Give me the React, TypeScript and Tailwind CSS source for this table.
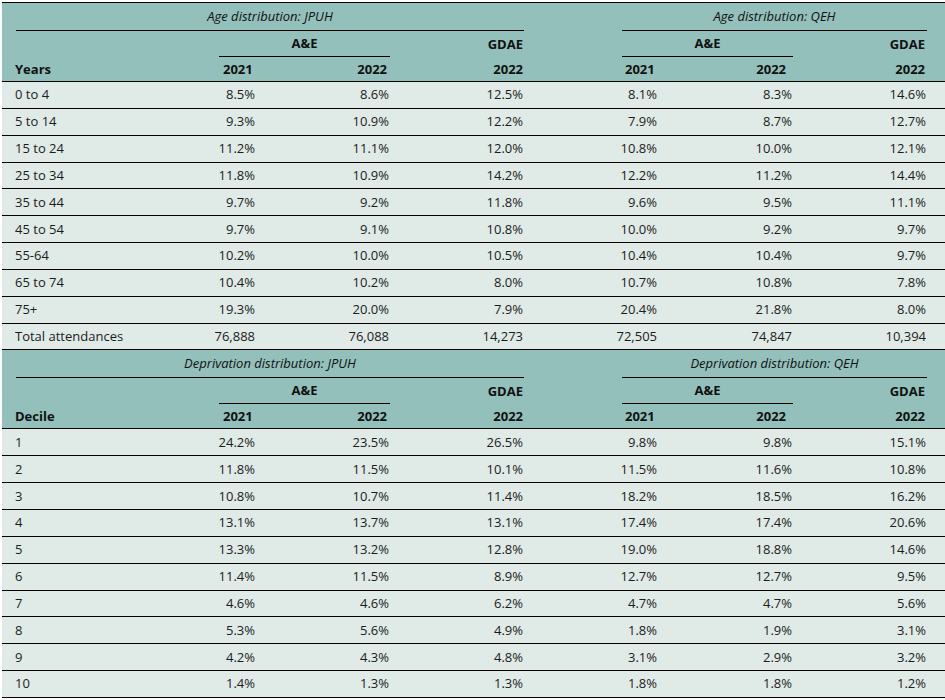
const ageRows: [string, string[]][] = [
  ["0 to 4", ["8.5%", "8.6%", "12.5%", "8.1%", "8.3%", "14.6%"]],
  ["5 to 14", ["9.3%", "10.9%", "12.2%", "7.9%", "8.7%", "12.7%"]],
  ["15 to 24", ["11.2%", "11.1%", "12.0%", "10.8%", "10.0%", "12.1%"]],
  ["25 to 34", ["11.8%", "10.9%", "14.2%", "12.2%", "11.2%", "14.4%"]],
  ["35 to 44", ["9.7%", "9.2%", "11.8%", "9.6%", "9.5%", "11.1%"]],
  ["45 to 54", ["9.7%", "9.1%", "10.8%", "10.0%", "9.2%", "9.7%"]],
  ["55-64", ["10.2%", "10.0%", "10.5%", "10.4%", "10.4%", "9.7%"]],
  ["65 to 74", ["10.4%", "10.2%", "8.0%", "10.7%", "10.8%", "7.8%"]],
  ["75+", ["19.3%", "20.0%", "7.9%", "20.4%", "21.8%", "8.0%"]],
  ["Total attendances", ["76,888", "76,088", "14,273", "72,505", "74,847", "10,394"]],
];

const decileRows: [string, string[]][] = [
  ["1", ["24.2%", "23.5%", "26.5%", "9.8%", "9.8%", "15.1%"]],
  ["2", ["11.8%", "11.5%", "10.1%", "11.5%", "11.6%", "10.8%"]],
  ["3", ["10.8%", "10.7%", "11.4%", "18.2%", "18.5%", "16.2%"]],
  ["4", ["13.1%", "13.7%", "13.1%", "17.4%", "17.4%", "20.6%"]],
  ["5", ["13.3%", "13.2%", "12.8%", "19.0%", "18.8%", "14.6%"]],
  ["6", ["11.4%", "11.5%", "8.9%", "12.7%", "12.7%", "9.5%"]],
  ["7", ["4.6%", "4.6%", "6.2%", "4.7%", "4.7%", "5.6%"]],
  ["8", ["5.3%", "5.6%", "4.9%", "1.8%", "1.9%", "3.1%"]],
  ["9", ["4.2%", "4.3%", "4.8%", "3.1%", "2.9%", "3.2%"]],
  ["10", ["1.4%", "1.3%", "1.3%", "1.8%", "1.8%", "1.2%"]],
];

const grid =
  "grid grid-cols-[198px_58px_132px_134px_76px_60px_133px_134px_18px]";

// right padding per value column, in table order
const valuePad = ["pr-[3px]", "pr-[1px]", "pr-[1px]", "pr-[3px]", "pr-[1px]", "pr-[1px]"];
const valueCol = [
  "col-start-2",
  "col-start-3",
  "col-start-4",
  "col-start-6",
  "col-start-7",
  "col-start-8",
];

function HeaderBlock({ title, label }: { title: string; label: string }) {
  return (
    <div className="bg-[#93c0ba] font-bold text-[#111]">
      <div className={`${grid} h-[28px]`}>
        <div className="col-span-4 ml-[14px] flex items-center justify-center border-b border-black font-normal italic">
          {title}: JPUH
        </div>
        <div className="col-start-6 col-span-3 ml-[22px] flex items-center justify-center border-b border-black font-normal italic">
          {title}: QEH
        </div>
      </div>
      <div className={`${grid} h-[26px]`}>
        <div className="col-start-2 col-span-2 ml-[19px] flex items-center justify-center border-b border-black">
          A&amp;E
        </div>
        <div className="col-start-4 flex items-center justify-end pr-[1px]">GDAE</div>
        <div className="col-start-6 col-span-2 ml-[22px] flex items-center justify-center border-b border-black">
          A&amp;E
        </div>
        <div className="col-start-8 flex items-center justify-end pr-[2px]">GDAE</div>
      </div>
      <div className={`${grid} h-[25px] border-b border-black`}>
        <div className="flex items-center pl-[13px]">{label}</div>
        <div className="flex items-center pl-[23px]">2021</div>
        <div className="flex items-center justify-end pr-[3px]">2022</div>
        <div className="flex items-center justify-end pr-[1px]">2022</div>
        <div className="col-start-6 flex items-center pl-[25px]">2021</div>
        <div className="flex items-center justify-end pr-[7px]">2022</div>
        <div className="flex items-center justify-end pr-[2px]">2022</div>
      </div>
    </div>
  );
}

function DataRows({ rows }: { rows: [string, string[]][] }) {
  return (
    <div className="bg-[#e0eae7] text-[#1c1c1c]">
      {rows.map(([label, values]) => (
        <div key={label} className={`${grid} h-[26.85px] border-b border-black`}>
          <div className="flex items-center pl-[13px] whitespace-nowrap">{label}</div>
          {values.map((v, i) => (
            <div
              key={i}
              className={`${valueCol[i]} ${valuePad[i]} row-start-1 flex items-center justify-end whitespace-nowrap`}
            >
              {v}
            </div>
          ))}
        </div>
      ))}
    </div>
  );
}

export default function App() {
  return (
    <div className="min-h-[700px] bg-white pt-[2px] pl-[2px]">
      <div
        className="w-[943px] border-t border-black text-[13px] leading-none"
        style={{ fontFamily: '"Open Sans", "Noto Sans", sans-serif' }}
      >
        <HeaderBlock title="Age distribution" label="Years" />
        <DataRows rows={ageRows} />
        <HeaderBlock title="Deprivation distribution" label="Decile" />
        <DataRows rows={decileRows} />
      </div>
    </div>
  );
}
